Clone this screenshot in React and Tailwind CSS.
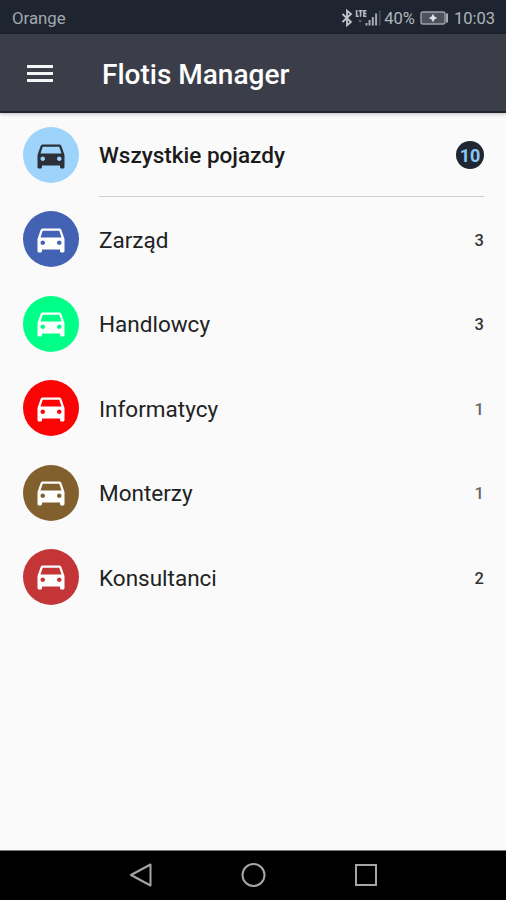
const groups = [
  { name: "Zarząd", count: 3, color: "bg-[#4462b4]", tone: "text-[#333]" },
  { name: "Handlowcy", count: 3, color: "bg-[#00ff86]", tone: "text-[#333]" },
  { name: "Informatycy", count: 1, color: "bg-[#fa0505]", tone: "text-[#666]" },
  { name: "Monterzy", count: 1, color: "bg-[#81602d]", tone: "text-[#666]" },
  { name: "Konsultanci", count: 2, color: "bg-[#c43538]", tone: "text-[#333]" },
];

function CarBadge({ className }) {
  return (
    <div className={`flex size-14 shrink-0 items-center justify-center rounded-full pb-px ${className}`}>
      <svg viewBox="0 0 24 24" className="size-9" fill="currentColor">
        <path d="M18.92 6.01C18.72 5.42 18.16 5 17.5 5h-11c-.66 0-1.21.42-1.42 1.01L3 12v8c0 .55.45 1 1 1h1c.55 0 1-.45 1-1v-1h12v1c0 .55.45 1 1 1h1c.55 0 1-.45 1-1v-8l-2.08-5.99zM6.5 16c-.83 0-1.5-.67-1.5-1.5S5.67 13 6.5 13s1.5.67 1.5 1.5S7.33 16 6.5 16zm11 0c-.83 0-1.5-.67-1.5-1.5s.67-1.5 1.5-1.5 1.5.67 1.5 1.5-.67 1.5-1.5 1.5zM5 11l1.5-4.5h11L19 11H5z" />
      </svg>
    </div>
  );
}

function StatusBar() {
  return (
    <div className="flex h-[34px] shrink-0 items-center bg-[#1e2531] pt-[4px] pl-3 pr-[11px] text-[16.5px] leading-none text-[#a3a8ae]">
      <span className="flex-1 pb-[2px] text-[16.8px]">Orange</span>
      <svg width="14" height="18" viewBox="0 0 14 18" fill="none" stroke="#c0c5ca" strokeWidth="1.8" className="mr-[1px] mb-[2px]">
        <path d="M2.5 5l8.5 8L7 16.3V1.7L11 5l-8.5 8" />
      </svg>
      <svg width="27" height="18" viewBox="0 0 27 18" className="mr-[2px] mb-[3px]">
        <g fill="none" stroke="#b6bbc1" strokeWidth="1.6">
          <path d="M1.6 1v6.2h2.2M3.6 1.8h4M5.6 1.8v6M11.4 1.8H8.9v5.4h2.5M8.9 4.5h2.5" />
        </g>
        <path d="M3 11h4l-2 3z" fill="#555c67" />
        <g fill="#a5abb1">
          <path d="M10.5 14h2v2.5h-2zM13.5 11h2v5.5h-2zM16.8 8h2v8.5h-2zM20.1 4.5h2v12h-2z" />
        </g>
        <path d="M24 1.5h1.6v15H24z" fill="#464d59" />
      </svg>
      <span className="text-[16.5px] text-[#b0b5ba]">40%</span>
      <svg width="31" height="14" viewBox="0 0 31 14" className="ml-1 mr-[4px] mb-[3px]">
        <rect x="2" y="1" width="24" height="12" rx="2" fill="#4b525d" stroke="#9da2a9" strokeWidth="1.4" />
        <path d="M28 2.5v9" stroke="#a7acb2" strokeWidth="2" />
        <path d="M14 2.8l1.4 2.8 2.8 1.4-2.8 1.4-1.4 2.8-1.4-2.8L9.8 7l2.8-1.4z" fill="#e0e3e6" />
      </svg>
      <span className="text-[16.5px] text-[#b0b5ba]">10:03</span>
    </div>
  );
}

export default function App() {
  return (
    <div className="flex h-[900px] w-[506px] flex-col overflow-hidden bg-[#fafafa] font-['Roboto',sans-serif]">
      <StatusBar />
      <header className="z-10 flex h-[79px] shrink-0 items-center border-b-2 border-[#1e2330] bg-[#3b3e49] pl-[27px] shadow-[0_1px_4px_rgba(0,0,0,0.25)]">
        <div className="mt-[2px] flex w-[75px] flex-col gap-1">
          <span className="h-[3px] w-[26px] bg-[#f4f5f5]" />
          <span className="h-[3px] w-[26px] bg-[#f4f5f5]" />
          <span className="h-[3px] w-[26px] bg-[#f4f5f5]" />
        </div>
        <h1 className="mt-[4px] text-[28px] font-medium leading-8 text-white">Flotis Manager</h1>
      </header>
      <main className="flex-1 pl-[23px] pr-[22px]">
        <div className="flex h-[84.4px] gap-5">
          <CarBadge className="mt-[14px] bg-[#9ed4fc] text-[#2d3039]" />
          <div className="flex flex-1 items-center justify-between border-b border-[#cfcfcf]">
            <span className="mt-[3px] text-[22.5px] font-medium text-[#1b1b1b]">Wszystkie pojazdy</span>
            <span className="mt-px flex size-7 items-center justify-center rounded-full bg-[#202733] pt-px text-[18px] font-bold text-[#8ec8f2]">10</span>
          </div>
        </div>
        {groups.map((g) => (
          <div key={g.name} className="flex h-[84.4px] gap-5">
            <CarBadge className={`mt-[14px] text-white ${g.color}`} />
            <div className="flex flex-1 items-center justify-between">
              <span className="mt-[2.5px] text-[22.5px] text-[#222]">{g.name}</span>
              <span className={`mt-[3.5px] text-[16.5px] font-medium ${g.tone}`}>{g.count}</span>
            </div>
          </div>
        ))}
      </main>
      <nav className="flex h-[50px] shrink-0 items-center justify-center gap-[87px] border-t border-[#777] bg-black pb-[2px]">
        <svg width="26" height="26" viewBox="0 0 26 26" fill="none" stroke="#a6a6a6" strokeWidth="2" strokeLinejoin="round">
          <path d="M23.5 2.5v21L4 13z" />
        </svg>
        <svg width="26" height="26" viewBox="0 0 26 26" fill="none" stroke="#a6a6a6" strokeWidth="2">
          <circle cx="13.5" cy="13" r="11" />
        </svg>
        <svg width="26" height="26" viewBox="0 0 26 26" fill="none" stroke="#a6a6a6" strokeWidth="2">
          <rect x="3" y="3" width="20" height="20" />
        </svg>
      </nav>
    </div>
  );
}
